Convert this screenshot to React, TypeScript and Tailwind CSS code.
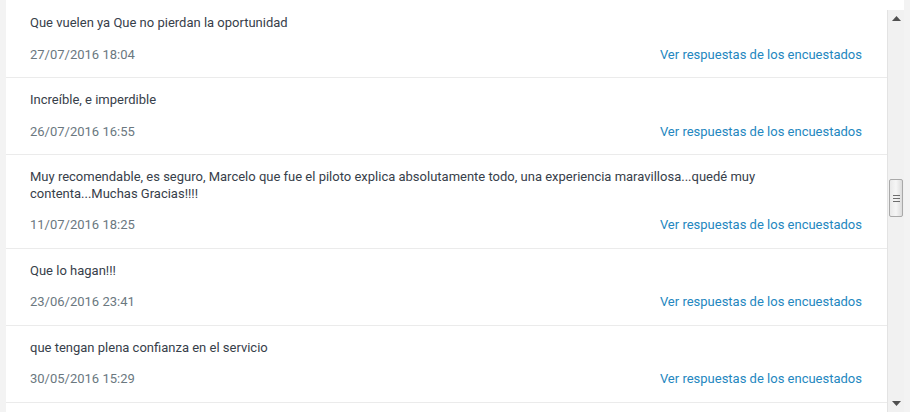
import React from "react"

interface Respuesta {
  texto: string
  fecha: string
}

const respuestas: Respuesta[] = [
  { texto: "Que vuelen ya Que no pierdan la oportunidad", fecha: "27/07/2016 18:04" },
  { texto: "Increíble, e imperdible", fecha: "26/07/2016 16:55" },
  {
    texto:
      "Muy recomendable, es seguro, Marcelo que fue el piloto explica absolutamente todo, una experiencia maravillosa...quedé muy contenta...Muchas Gracias!!!!",
    fecha: "11/07/2016 18:25",
  },
  { texto: "Que lo hagan!!!", fecha: "23/06/2016 23:41" },
  { texto: "que tengan plena confianza en el servicio", fecha: "30/05/2016 15:29" },
]

function Scrollbar() {
  return (
    <div className="mt-[10px] flex w-[17px] flex-col border-l border-[#e3e3e3] bg-[#f1f1f1]">
      {/* up arrow */}
      <div className="flex h-[17px] items-center justify-center">
        <svg width="9" height="5" viewBox="0 0 9 5">
          <path d="M4.5 0 L9 5 L0 5 Z" fill="#505050" />
        </svg>
      </div>
      <div className="h-[152px]" />
      {/* thumb */}
      <div className="mx-[1px] flex h-[38px] flex-col items-center justify-center gap-[2px] rounded-[2px] border border-[#a9a9a9] bg-gradient-to-r from-[#e9e9e9] via-[#f6f6f6] to-[#dcdcdc]">
        <div className="h-px w-[7px] bg-[#6d6d6d]" />
        <div className="h-px w-[7px] bg-[#6d6d6d]" />
        <div className="h-px w-[7px] bg-[#6d6d6d]" />
      </div>
      <div className="flex-1" />
      {/* down arrow */}
      <div className="flex h-[17px] items-center justify-center">
        <svg width="9" height="5" viewBox="0 0 9 5">
          <path d="M0 0 L9 0 L4.5 5 Z" fill="#505050" />
        </svg>
      </div>
    </div>
  )
}

export default function App() {
  return (
    <div
      className="flex h-[412px] w-[910px] overflow-hidden bg-[#f3f3f3] pl-[6px] pr-[6px]"
      style={{ fontFamily: "Roboto, 'Liberation Sans', sans-serif" }}
    >
      <div className="flex flex-1 bg-white">
        {/* list of answers */}
        <div className="flex-1 overflow-hidden">
          {respuestas.map((r, i) => (
            <div
              key={i}
              className={`border-b border-[#ebebeb] px-6 pb-[14px] ${i === 0 ? "pt-[15px]" : "pt-[14px]"}`}
            >
              <p className="pr-[70px] text-[13px] leading-[16.5px] text-[#37404a]">{r.texto}</p>
              <div className="mt-[15px] flex items-center justify-between text-[13px] leading-[16.5px]">
                <span className="text-[#6b787f]">{r.fecha}</span>
                <a className="pr-[1px] text-[#2487c0]">Ver respuestas de los encuestados</a>
              </div>
            </div>
          ))}
        </div>
        <Scrollbar />
      </div>
    </div>
  )
}
